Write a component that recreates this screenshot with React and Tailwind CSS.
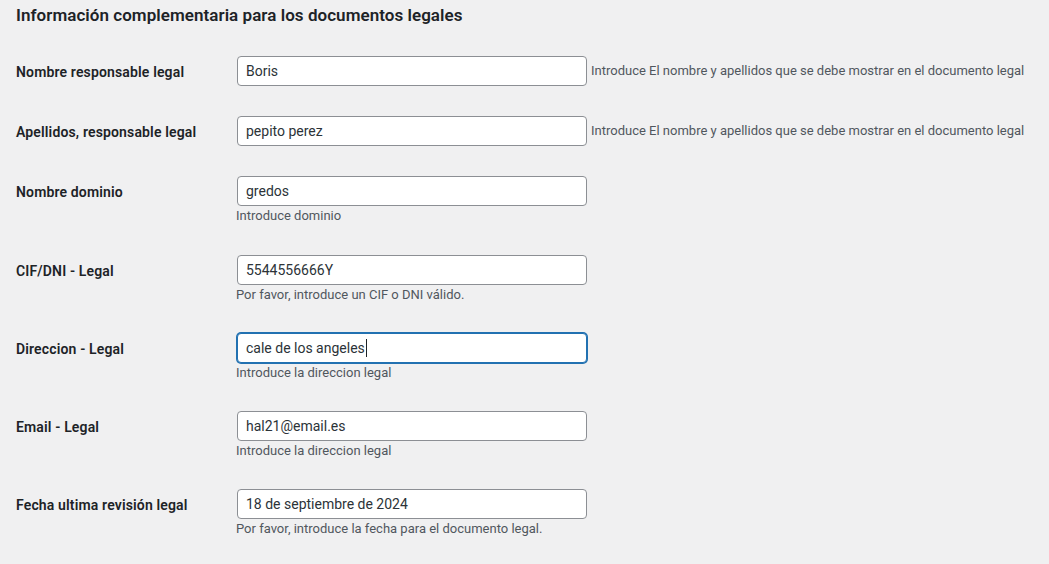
const rows = [
  { label: 'Nombre responsable legal', value: 'Boris', side: 'Introduce El nombre y apellidos que se debe mostrar en el documento legal' },
  { label: 'Apellidos, responsable legal', value: 'pepito perez', side: 'Introduce El nombre y apellidos que se debe mostrar en el documento legal' },
  { label: 'Nombre dominio', value: 'gredos', desc: 'Introduce dominio', tall: true },
  { label: 'CIF/DNI - Legal', value: '5544556666Y', desc: 'Por favor, introduce un CIF o DNI válido.' },
  { label: 'Direccion - Legal', value: 'cale de los angeles', desc: 'Introduce la direccion legal', focus: true },
  { label: 'Email - Legal', value: 'hal21@email.es', desc: 'Introduce la direccion legal' },
  { label: 'Fecha ultima revisión legal', value: '18 de septiembre de 2024', desc: 'Por favor, introduce la fecha para el documento legal.' },
];

function Field({ value, focus }) {
  return (
    <div
      className={
        focus
          ? 'w-[350px] h-[30px] shrink-0 rounded-[4px] bg-white border border-[#2271b1] shadow-[0_0_0_1px_#2271b1] px-[8px] flex items-center text-[14px] text-[#2c3338]'
          : 'w-[350px] h-[30px] shrink-0 rounded-[4px] bg-white border border-[#8c8f94] px-[8px] flex items-center text-[14px] text-[#2c3338]'
      }
    >
      <span className="whitespace-nowrap">{value}</span>
      {focus && <span className="inline-block w-px h-[18px] bg-[#1d2327] ml-px" />}
    </div>
  );
}

export default function App() {
  return (
    <div className="min-h-screen bg-[#f0f0f1] pl-[16px]" style={{ fontFamily: 'Roboto, "Liberation Sans", sans-serif' }}>
      <h2 className="h-[41px] pt-[4px] text-[17px] leading-[22px] font-semibold text-[#1d2327] tracking-[0.05px]">
        Información complementaria para los documentos legales
      </h2>
      {rows.map((r) => (
        <div key={r.label} className="flex py-[15px]">
          <div className="w-[221px] shrink-0 h-[30px] pt-[2px] flex items-center text-[14px] font-semibold text-[#1d2327] whitespace-nowrap tracking-[0.15px]">
            {r.label}
          </div>
          <div className="flex flex-col">
            <div className="flex items-center gap-[4px]">
              <Field value={r.value} focus={r.focus} />
              {r.side && <span className="text-[13px] text-[#50575e] whitespace-nowrap">{r.side}</span>}
            </div>
            {r.desc && (
              <div
                className={
                  r.tall
                    ? 'h-[19px] pt-[2px] leading-[16px] -ml-px text-[13px] text-[#50575e] whitespace-nowrap'
                    : 'h-[18px] pt-[2px] leading-[16px] -ml-px text-[13px] text-[#50575e] whitespace-nowrap'
                }
              >
                {r.desc}
              </div>
            )}
          </div>
        </div>
      ))}
    </div>
  );
}
